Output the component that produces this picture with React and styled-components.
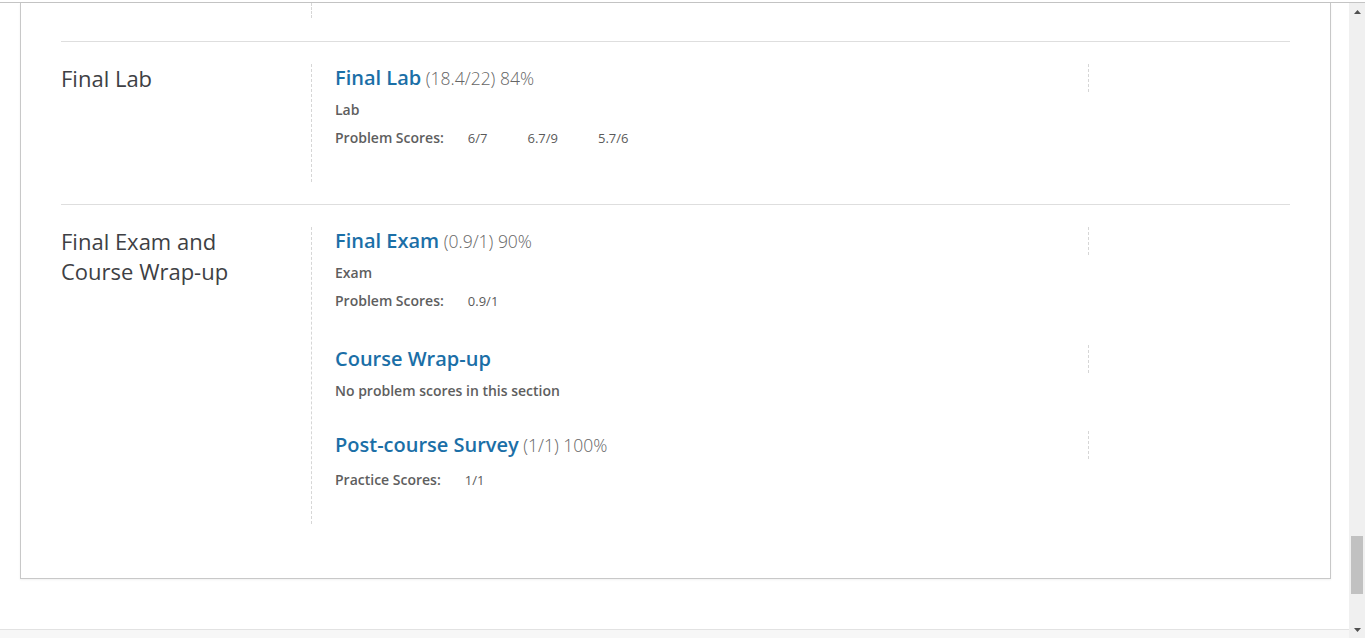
import styled, { createGlobalStyle } from "styled-components";

const GlobalStyle = createGlobalStyle`
    html, body {
        margin: 0;
        padding: 0;
        background: #fff;
        overflow: hidden;
    }
    body {
        font-family: "Open Sans", "Noto Sans", Arial, sans-serif;
    }
`;

const chapters = [
    {
        title: "Final Lab",
        sections: [
            {
                name: "Final Lab",
                score: "(18.4/22) 84%",
                type: "Lab",
                label: "Problem Scores:",
                scores: ["6/7", "6.7/9", "5.7/6"],
            },
        ],
    },
    {
        title: "Final Exam and Course Wrap-up",
        sections: [
            {
                name: "Final Exam",
                score: "(0.9/1) 90%",
                type: "Exam",
                label: "Problem Scores:",
                scores: ["0.9/1"],
            },
            {
                name: "Course Wrap-up",
                empty: "No problem scores in this section",
            },
            {
                name: "Post-course Survey",
                score: "(1/1) 100%",
                label: "Practice Scores:",
                scores: ["1/1"],
            },
        ],
    },
];

const Section = ({ data }) => (
    <SectionBlock $tight={!!data.empty}>
        <SectionHeader>
            <SectionTitle>
                <a>{data.name}</a>
                {data.score && <span> {data.score}</span>}
            </SectionTitle>
            <SectionAside />
        </SectionHeader>
        {data.type && <SectionType>{data.type}</SectionType>}
        {data.empty && <EmptyNote>{data.empty}</EmptyNote>}
        {data.scores && (
            <ScoreList $first={!data.type}>
                <dt>{data.label}</dt>
                {data.scores.map((s, i) => (
                    <dd key={i}>{s}</dd>
                ))}
            </ScoreList>
        )}
    </SectionBlock>
);

export default function App() {
    return (
        <Window>
            <GlobalStyle />
            <TopEdge />
            <Body>
                <Main>
                    <CardWrap>
                        <Card>
                            <TailRow>
                                <ChapterLabel />
                                <TailColumn />
                            </TailRow>
                            {chapters.map((c) => (
                                <Chapter key={c.title}>
                                    <ChapterLabel>{c.title}</ChapterLabel>
                                    <Sections>
                                        {c.sections.map((s) => (
                                            <Section key={s.name} data={s} />
                                        ))}
                                    </Sections>
                                </Chapter>
                            ))}
                        </Card>
                    </CardWrap>
                    <Footer />
                </Main>
                <Scrollbar>
                    <ScrollButton>
                        <svg width="7" height="4" viewBox="0 0 7 4">
                            <path d="M0 4 L3.5 0 L7 4 Z" fill="#505050" />
                        </svg>
                    </ScrollButton>
                    <Track>
                        <Thumb style={{ marginTop: 516, height: 58 }} />
                    </Track>
                    <ScrollButton>
                        <svg width="7" height="4" viewBox="0 0 7 4">
                            <path d="M0 0 L7 0 L3.5 4 Z" fill="#505050" />
                        </svg>
                    </ScrollButton>
                </Scrollbar>
            </Body>
        </Window>
    );
}

const Window = styled.div`
    display: flex;
    flex-direction: column;
    height: 638px;
    overflow: hidden;
`;

const TopEdge = styled.div`
    height: 2px;
    flex-shrink: 0;
    border-bottom: 1px solid #c4c4c4;
`;

const Body = styled.div`
    display: flex;
    flex: 1;
    min-height: 0;
`;

const Main = styled.div`
    flex: 1;
    display: flex;
    flex-direction: column;
    min-width: 0;
`;

const CardWrap = styled.div`
    padding: 0 18px 0 20px;
`;

const Card = styled.div`
    border: 1px solid #c8c8c8;
    border-top: none;
    box-shadow: 0 1px 2px rgba(0, 0, 0, 0.06);
    padding: 0 40px 32px;
    background: #fff;
`;

const Chapter = styled.div`
    display: flex;
    padding: 22px 0;
    border-top: 1px solid #dedede;
`;

const TailRow = styled.div`
    display: flex;
    padding-bottom: 23px;
`;

const ChapterLabel = styled.h2`
    width: 250px;
    flex-shrink: 0;
    margin: -1px 0 0;
    padding-right: 30px;
    box-sizing: border-box;
    font-size: 22px;
    line-height: 30px;
    font-weight: 400;
    color: #3e3f44;
`;

const TailColumn = styled.div`
    height: 15px;
    flex: 1;
    border-left: 1px dashed #d6d6d6;
`;

const Sections = styled.div`
    flex: 1;
    display: flex;
    flex-direction: column;
    padding: 0 0 34px 23px;
    border-left: 1px dashed #d6d6d6;
`;

const SectionBlock = styled.div`
    display: flex;
    flex-direction: column;
    padding-bottom: ${(p) => (p.$tight ? "30px" : "34px")};

    &:last-child {
        padding-bottom: 0;
    }
`;

const SectionHeader = styled.div`
    display: flex;
    height: 28px;
`;

const SectionTitle = styled.h3`
    flex: 1;
    margin: 0;
    font-size: 20px;
    line-height: 28px;
    font-weight: 600;
    white-space: nowrap;

    a {
        color: #1b6fa7;
        cursor: pointer;
    }

    span {
        font-size: 17.5px;
        font-weight: 300;
        color: #666;
    }
`;

const SectionAside = styled.div`
    width: 201px;
    border-left: 1px dashed #d6d6d6;
`;

const SectionType = styled.p`
    margin: 8px 0 0;
    font-size: 14px;
    line-height: 20px;
    font-weight: 600;
    color: #5e5e5e;
`;

const EmptyNote = styled(SectionType)`
    margin-top: 8px;
`;

const ScoreList = styled.dl`
    display: flex;
    align-items: baseline;
    margin: ${(p) => (p.$first ? "11px" : "8px")} 0 0;
    font-size: 14px;
    line-height: 20px;
    color: #5e5e5e;

    dt {
        font-weight: 600;
        margin-right: 24px;
    }

    dd {
        margin: 0 40px 0 0;
        font-size: 13px;
        font-weight: 400;
        color: #5a5a5a;
    }
`;

const Footer = styled.div`
    margin-top: 50px;
    flex: 1;
    border-top: 1px solid #e2e2e2;
    background: #f7f7f7;
`;

const Scrollbar = styled.div`
    width: 16px;
    flex-shrink: 0;
    display: flex;
    flex-direction: column;
    background: #f0f0f0;
`;

const ScrollButton = styled.div`
    height: 17px;
    display: flex;
    align-items: center;
    justify-content: center;
`;

const Track = styled.div`
    flex: 1;
    display: flex;
    flex-direction: column;
    align-items: center;
`;

const Thumb = styled.div`
    width: 12px;
    background: #c1c1c1;
`;
